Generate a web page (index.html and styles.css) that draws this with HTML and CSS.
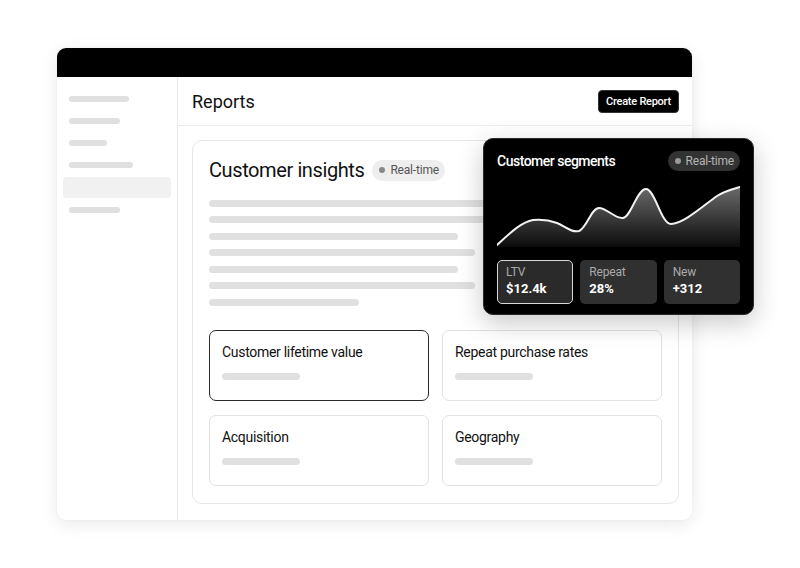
FILE: index.html
```html
<!DOCTYPE html>
<html>
<head>
<meta charset="utf-8">
<link rel="stylesheet" href="styles.css">
</head>
<body>
<div class="window">
  <div class="topbar"></div>
  <div class="body">
    <aside class="sidebar">
      <div class="nav-row"><span class="bar" style="width:60px"></span></div>
      <div class="nav-row"><span class="bar" style="width:51px"></span></div>
      <div class="nav-row"><span class="bar" style="width:38px"></span></div>
      <div class="nav-row"><span class="bar" style="width:64px"></span></div>
      <div class="nav-row active"></div>
      <div class="nav-row"><span class="bar" style="width:51px"></span></div>
    </aside>
    <main class="main">
      <header class="header">
        <h1 class="page-title">Reports</h1>
        <button class="btn">Create Report</button>
      </header>
      <div class="content">
        <section class="card">
          <div class="card-head">
            <h2 class="card-title">Customer insights</h2>
            <span class="badge"><span class="dot"></span>Real-time</span>
          </div>
          <div class="lines">
            <span class="line" style="width:290px"></span>
            <span class="line" style="width:290px"></span>
            <span class="line" style="width:249px"></span>
            <span class="line" style="width:266px"></span>
            <span class="line" style="width:249px"></span>
            <span class="line" style="width:266px"></span>
            <span class="line" style="width:150px"></span>
          </div>
          <div class="grid">
            <div class="tile selected"><div class="tile-title">Customer lifetime value</div><span class="tile-bar"></span></div>
            <div class="tile"><div class="tile-title">Repeat purchase rates</div><span class="tile-bar"></span></div>
            <div class="tile"><div class="tile-title">Acquisition</div><span class="tile-bar"></span></div>
            <div class="tile"><div class="tile-title">Geography</div><span class="tile-bar"></span></div>
          </div>
        </section>
      </div>
    </main>
  </div>
  <div class="popup">
    <div class="popup-head">
      <span class="popup-title">Customer segments</span>
      <span class="badge dark"><span class="dot"></span>Real-time</span>
    </div>
    <svg class="chart" viewBox="0 0 243 61" width="243" height="61">
      <defs>
        <linearGradient id="g" x1="0" y1="0" x2="0" y2="1">
          <stop offset="0" stop-color="#6a6a6a"/>
          <stop offset="1" stop-color="#0c0c0c"/>
        </linearGradient>
      </defs>
      <path d="M0,59 C12,48 24,36 36,34 C46,33 52,34 60,37 C68,40 74,47 82,45 C90,42 94,22 102,22 C110,22 118,33 126,32 C134,31 140,3 149,3 C158,3 164,38 174,38 C186,38 206,20 220,10 C228,5 236,3 243,1 L243,61 L0,61 Z" fill="url(#g)"/>
      <path d="M0,59 C12,48 24,36 36,34 C46,33 52,34 60,37 C68,40 74,47 82,45 C90,42 94,22 102,22 C110,22 118,33 126,32 C134,31 140,3 149,3 C158,3 164,38 174,38 C186,38 206,20 220,10 C228,5 236,3 243,1" fill="none" stroke="#f2f2f2" stroke-width="2" stroke-linecap="round"/>
    </svg>
    <div class="stats">
      <div class="stat active"><span class="stat-label">LTV</span><span class="stat-value">$12.4k</span></div>
      <div class="stat"><span class="stat-label">Repeat</span><span class="stat-value">28%</span></div>
      <div class="stat"><span class="stat-label">New</span><span class="stat-value">+312</span></div>
    </div>
  </div>
</div>
</body>
</html>
```
FILE: styles.css
```css
* { box-sizing: border-box; }
html, body { margin: 0; padding: 0; background: #fff; }
body {
  font-family: Roboto, "Liberation Sans", sans-serif;
  color: #111;
  padding: 48px 0 0 57px;
  width: 800px;
  height: 568px;
  overflow: hidden;
}
.window {
  position: relative;
  width: 635px;
  height: 472px;
  background: #fff;
  border-radius: 9px;
  box-shadow: 0 4px 18px rgba(0,0,0,0.09), 0 0 2px rgba(0,0,0,0.06);
  display: flex;
  flex-direction: column;
}
.topbar {
  height: 29px;
  background: #000;
  border-radius: 9px 9px 0 0;
  flex: none;
}
.body { flex: 1; display: flex; min-height: 0; }
.sidebar {
  width: 121px;
  flex: none;
  border-right: 1px solid #ebebeb;
  padding-top: 11px;
  display: flex;
  flex-direction: column;
}
.nav-row {
  height: 22px;
  display: flex;
  align-items: center;
  padding-left: 12px;
}
.nav-row.active {
  height: 21px;
  margin: 1px 6px 1px 6px;
  background: #f1f1f1;
  border-radius: 4px;
}
.bar {
  display: block;
  height: 6px;
  border-radius: 3px;
  background: #e0e0e0;
}
.main { flex: 1; display: flex; flex-direction: column; }
.header {
  height: 49px;
  border-bottom: 1px solid #ececec;
  display: flex;
  align-items: center;
  justify-content: space-between;
  padding: 0 13px 0 14px;
  flex: none;
}
.page-title { margin: 0; font-size: 18px; font-weight: 400; color: #111; }
.btn {
  height: 23px;
  width: 81px;
  background: #000;
  color: #fff;
  border: 1px solid #333;
  border-radius: 4px;
  font-family: Roboto, "Liberation Sans", sans-serif;
  font-size: 11px;
  font-weight: 500;
  letter-spacing: -0.25px;
  padding: 0;
}
.content { flex: 1; padding: 14px 13px 16px 14px; display: flex; }
.card {
  flex: 1;
  border: 1px solid #e6e6e6;
  border-radius: 10px;
  padding: 17px 16px 16px 16px;
  display: flex;
  flex-direction: column;
}
.card-head { display: flex; align-items: center; gap: 8px; height: 24px; }
.card-title { margin: 0; font-size: 20px; font-weight: 400; color: #111; letter-spacing: -0.4px; }
.badge {
  display: inline-flex;
  align-items: center;
  gap: 5px;
  height: 21px;
  padding: 0 6px 0 7px;
  border-radius: 11px;
  background: #eeeeee;
  color: #555;
  font-size: 12px;
  letter-spacing: -0.2px;
}
.dot { width: 6px; height: 6px; border-radius: 50%; background: #888; display: inline-block; }
.lines {
  display: flex;
  flex-direction: column;
  gap: 9.6px;
  margin-top: 17.5px;
}
.line { display: block; height: 7px; border-radius: 4px; background: #e0e0e0; }
.grid {
  margin-top: 24px;
  display: grid;
  grid-template-columns: 1fr 1fr;
  gap: 14px 13px;
}
.tile {
  height: 71px;
  border: 1px solid #e2e2e2;
  border-radius: 7px;
  padding: 12px 12px;
}
.tile.selected { border-color: #2a2a2a; }
.tile-title { font-size: 14px; line-height: 18px; color: #111; letter-spacing: -0.3px; }
.tile-bar { display: block; margin-top: 11.5px; width: 78px; height: 7px; border-radius: 4px; background: #e0e0e0; }
.popup {
  position: absolute;
  left: 426px;
  top: 90px;
  width: 271px;
  height: 177px;
  background: #000;
  border: 1px solid #2a2a2a;
  border-radius: 10px;
  box-shadow: 0 8px 26px rgba(0,0,0,0.22);
  padding: 12px 13px 0 13px;
  color: #fff;
}
.popup-head { display: flex; justify-content: space-between; align-items: center; height: 20px; }
.popup-title { font-size: 14px; font-weight: 500; letter-spacing: -0.5px; }
.badge.dark { background: #333; color: #b4b4b4; height: 20px; border-radius: 10px; padding: 0 6px 0 7px; }
.badge.dark .dot { background: #999; }
.chart { display: block; margin-top: 15px; }
.stats { display: flex; gap: 7px; margin-top: 13px; }
.stat {
  flex: 1;
  height: 44px;
  background: #303030;
  border-radius: 5px;
  padding: 5px 9px;
  display: flex;
  flex-direction: column;
}
.stat.active { background: #2a2a2a; border: 1.5px solid #d8d8d8; padding: 4px 8px; }
.stat-label { font-size: 12px; color: #aaa; line-height: 15px; letter-spacing: -0.2px; }
.stat-value { font-size: 13px; font-weight: 700; color: #fff; line-height: 17px; }
```
